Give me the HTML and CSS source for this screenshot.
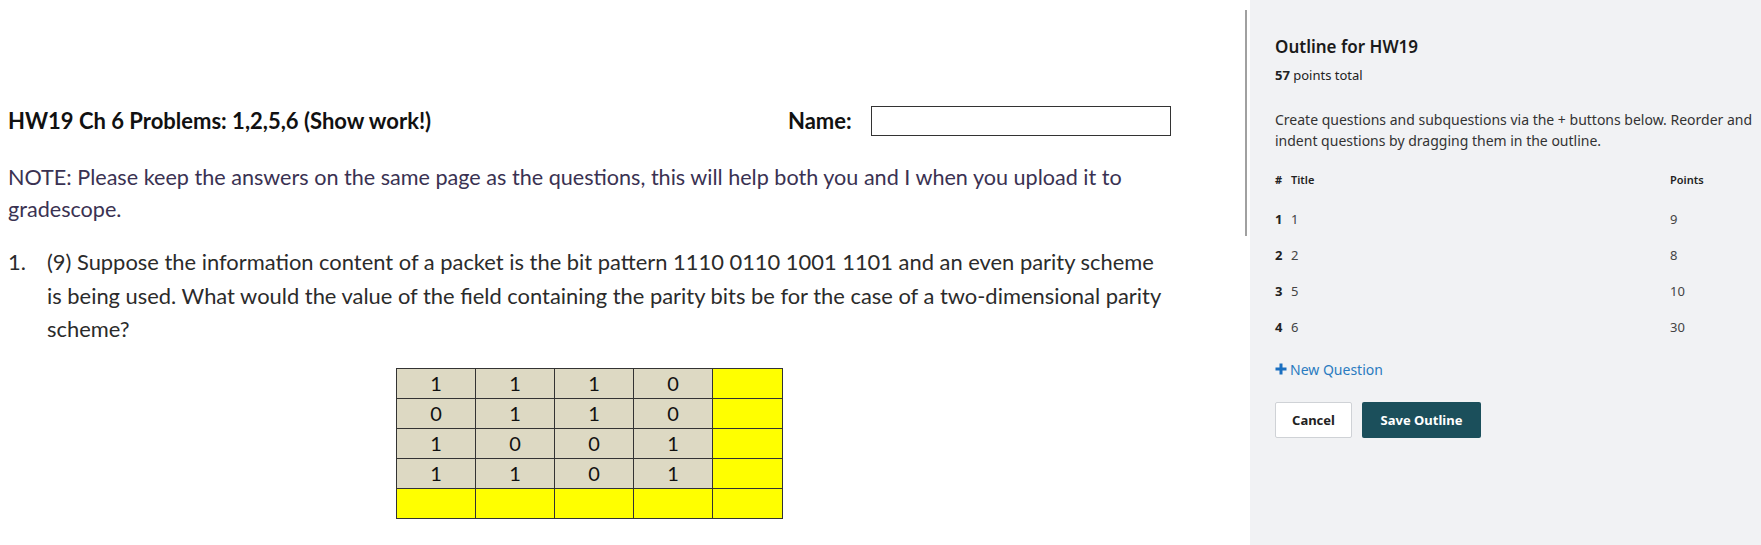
FILE: index.html
```html
<!DOCTYPE html>
<html>
<head>
<meta charset="utf-8">
<link rel="stylesheet" href="styles.css">
</head>
<body>
<div class="page">
  <div class="doc">
    <div class="head">
      <span class="title">HW19 Ch 6 Problems: 1,2,5,6 (Show work!)</span>
      <span class="name-label">Name:</span>
      <span class="name-box"></span>
    </div>
    <p class="note">NOTE: Please keep the answers on the same page as the questions, this will help both you and I when you upload it to gradescope.</p>
    <div class="q">
      <span class="q-num">1.</span>
      <span class="q-text">(9) Suppose the information content of a packet is the bit pattern 1110 0110 1001 1101 and an even parity scheme<br>is being used. What would the value of the field containing the parity bits be for the case of a two-dimensional parity<br>scheme?</span>
    </div>
    <table class="bits">
      <tr><td>1</td><td>1</td><td>1</td><td>0</td><td class="y"></td></tr>
      <tr><td>0</td><td>1</td><td>1</td><td>0</td><td class="y"></td></tr>
      <tr><td>1</td><td>0</td><td>0</td><td>1</td><td class="y"></td></tr>
      <tr><td>1</td><td>1</td><td>0</td><td>1</td><td class="y"></td></tr>
      <tr><td class="y"></td><td class="y"></td><td class="y"></td><td class="y"></td><td class="y"></td></tr>
    </table>
  </div>
  <div class="track"><div class="thumb"></div></div>
  <aside class="side">
    <h2 class="side-title">Outline for HW19</h2>
    <div class="total"><b>57</b> points total</div>
    <p class="desc">Create questions and subquestions via the + buttons below. Reorder and indent questions by dragging them in the outline.</p>
    <div class="ohead"><span class="c-num">#</span><span class="c-title">Title</span><span class="c-pts">Points</span></div>
    <div class="orow"><span class="c-num">1</span><span class="c-title">1</span><span class="c-pts">9</span></div>
    <div class="orow"><span class="c-num">2</span><span class="c-title">2</span><span class="c-pts">8</span></div>
    <div class="orow"><span class="c-num">3</span><span class="c-title">5</span><span class="c-pts">10</span></div>
    <div class="orow"><span class="c-num">4</span><span class="c-title">6</span><span class="c-pts">30</span></div>
    <div class="newq"><svg class="plus" width="12" height="12" viewBox="0 0 12 12"><path d="M6 0.5v11M0.5 6h11" stroke="#1a6fc0" stroke-width="3"/></svg><span>New Question</span></div>
    <div class="btns"><button class="btn cancel">Cancel</button><button class="btn save">Save Outline</button></div>
  </aside>
</div>
</body>
</html>
```
FILE: styles.css
```css
html, body { margin: 0; padding: 0; }
body { background: #fff; }
.page { display: flex; width: 1761px; height: 545px; overflow: hidden; }
.doc { width: 1243px; flex: none; padding-left: 8px; box-sizing: border-box; font-family: Lato, "Liberation Sans", sans-serif; }
.head { display: flex; align-items: center; margin-top: 105px; height: 31px; }
.title { font-weight: bold; font-size: 22px; color: #111; width: 780px; }
.name-label { font-weight: bold; font-size: 22px; color: #111; width: 83px; }
.name-box { width: 300px; height: 30px; border: 1px solid #333; box-sizing: border-box; }
.note { margin: 25px 0 0; font-size: 21.6px; line-height: 32px; color: #3a3252; width: 1150px; }
.q { display: flex; margin-top: 20px; font-size: 21.9px; line-height: 33.5px; color: #2b2b2b; }
.q-num { width: 39px; flex: none; }
.q-text { white-space: nowrap; }
.bits { border-collapse: collapse; margin: 22px 0 0 388px; }
.bits td { width: 78px; height: 29px; padding: 0; border: 1.5px solid #333; background: #ddd9c3; text-align: center; font-size: 20px; color: #111; font-family: Lato, sans-serif; }
.bits td:last-child { width: 69px; }
.bits td.y { background: #ffff00; }
.track { width: 7px; flex: none; }
.thumb { width: 2px; height: 226px; margin: 10px 0 0 2px; background: #a0a0a0; }
.side { flex: 1; background: #f1f2f4; padding: 0 2px 0 25px; font-family: "Noto Sans", sans-serif; color: #222; }
.side-title { margin: 35px 0 0; font-size: 17px; font-weight: 600; line-height: 24px; color: #1a1a1a; }
.total { margin-top: 7px; font-size: 13px; line-height: 18px; }
.desc { margin: 25px 0 0; font-size: 14px; line-height: 21px; color: #333; }
.ohead, .orow { display: flex; font-size: 13px; }
.ohead { margin-top: 18px; margin-right: 8px; font-size: 11px; font-weight: 600; height: 20px; align-items: center; }
.orow { height: 36px; align-items: center; color: #444; margin-right: 8px; }
.ohead + .orow { margin-top: 12px; }
.c-num { width: 16px; font-weight: 700; color: #222; }
.c-title { flex: 1; }
.c-pts { width: 81px; }
.newq { margin-top: 14px; display: flex; align-items: center; gap: 3px; color: #2a7bc0; font-size: 14px; height: 20px; }
.btns { margin-top: 23px; display: flex; gap: 10px; }
.btn { height: 36px; font-family: "Noto Sans", sans-serif; font-weight: 700; font-size: 13px; border-radius: 2px; padding: 0; }
.cancel { width: 77px; background: #fff; border: 1px solid #cfd2d6; color: #222; }
.save { width: 119px; background: #1b4f5b; border: none; color: #fff; }
```
